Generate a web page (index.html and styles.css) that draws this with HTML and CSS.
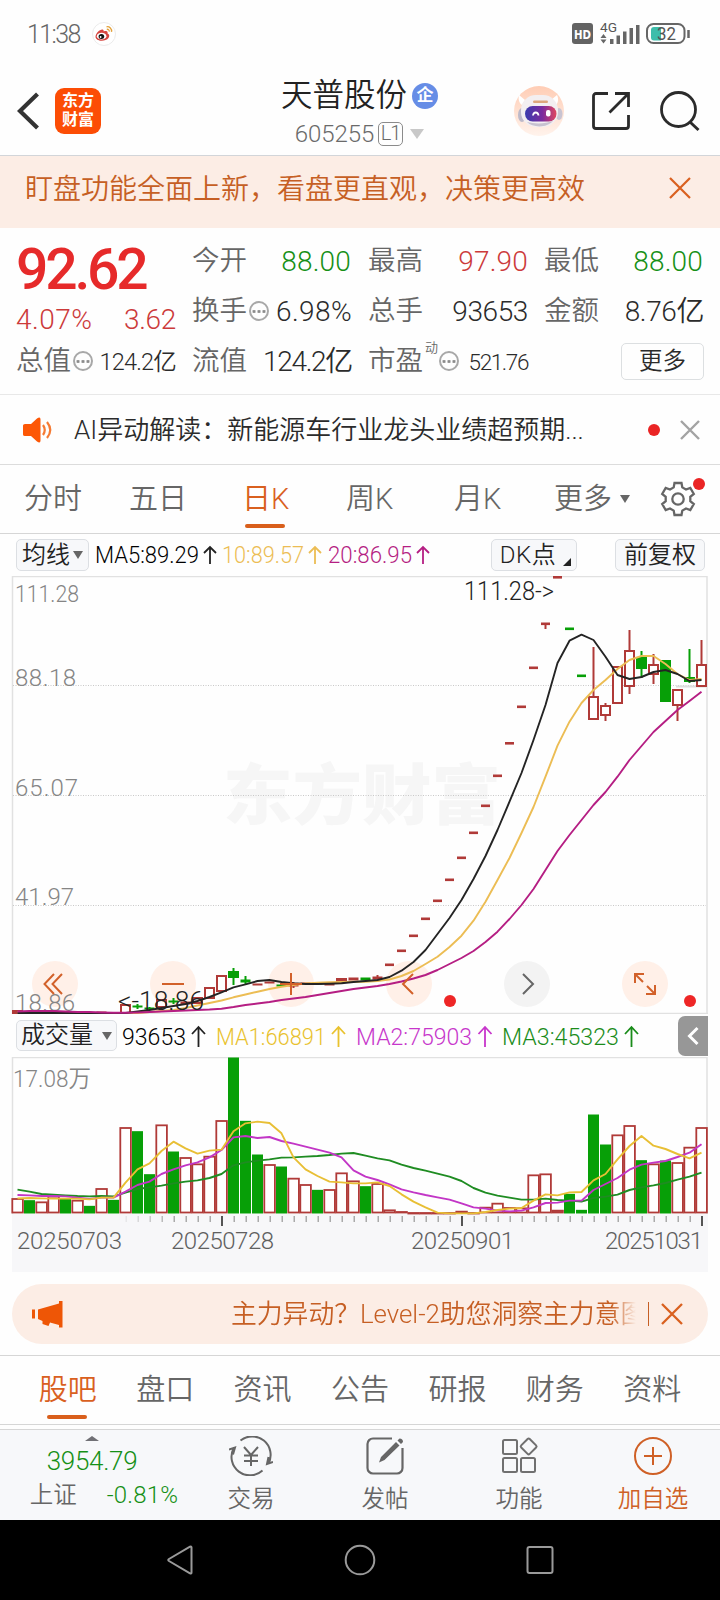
FILE: index.html
```html
<!DOCTYPE html>
<html lang="zh-CN">
<head>
<meta charset="utf-8">
<title>天普股份 605255</title>
<link rel="stylesheet" href="styles.css">
</head>
<body>
<div class="app">
  <div class="status">
    <span class="clock">11:38</span>
    <svg class="weibo" width="24" height="24" viewBox="0 0 24 24">
      <circle cx="12" cy="12" r="11.5" fill="#fff" stroke="#e6e6e6" stroke-width=".8"/>
      <path d="M3.5 14.5C4 11 8 7 10.600 7.500c1.600.3.9 1.900.9 1.900s3.500-1 4 .7c.3 1 0 1.500 0 1.500 2 .6 2.300 2.800 1 4.400-3 4-13.200 3.600-13-1.500z" fill="#d6453f"/>
      <ellipse cx="9.600" cy="14.200" rx="4.800" ry="3.400" fill="#fff"/>
      <ellipse cx="9.400" cy="14.400" rx="2.800" ry="2.500" fill="#111"/>
      <circle cx="8.600" cy="15" r=".9" fill="#fff"/>
      <path d="M14.500 4.800c3-.6 5.600 2 5 5M14.800 7.300c1.600-.2 2.700 1 2.400 2.400" fill="none" stroke="#e3a13a" stroke-width="1.300"/>
    </svg>
    <svg class="signals" width="118" height="28" viewBox="0 -2 118 28">
      <rect x="0" y="1" width="21" height="21" rx="3" fill="#636363"/>
      <text x="2" y="16.500" class="hd" textLength="17" lengthAdjust="spacingAndGlyphs">HD</text>
      <text x="28" y="10" class="g4" textLength="17" lengthAdjust="spacingAndGlyphs">4G</text>
      <path d="M28.500 16l3-4 3 4zM28.500 17.500l3 4 3-4z" fill="#666"/>
      <path d="M38 17h3.500v5H38zM44.500 13.500H48V22h-3.500zM51 9.500h3.500V22H51zM57.500 6H61v16h-3.500zM64 3h3.500v19H64z" fill="#666"/>
      <rect x="75" y="2" width="37.500" height="19" rx="6.500" fill="none" stroke="#666" stroke-width="2"/>
      <path d="M82 5h7v13.500h-7a3 3 0 0 1-3-3V8a3 3 0 0 1 3-3z" fill="#3dbdab"/>
      <path d="M116.500 8v8" stroke="#666" stroke-width="2.500"/>
      <text x="85" y="18" class="pct" textLength="19" lengthAdjust="spacingAndGlyphs">32</text>
    </svg>
  </div>

  <header class="top">
    <svg class="back" width="24" height="40" viewBox="0 0 24 40"><path d="M20.500 3L3 20l17.500 17" fill="none" stroke="#333" stroke-width="4.200"/></svg>
    <div class="logo"><span>东方</span><span>财富</span></div>
    <div class="name">
      <div class="title">天普股份<span class="badge">企</span></div>
      <div class="code">605255<span class="lv">L1</span><i class="tri"></i></div>
    </div>
    <svg class="robot" width="50" height="50" viewBox="0 0 50 50">
      <defs>
        <linearGradient id="rb" x1="0" y1="0" x2="0" y2="1"><stop offset="0" stop-color="#ffcdb5"/><stop offset="1" stop-color="#fff3ec"/></linearGradient>
        <linearGradient id="rv"><stop offset="0" stop-color="#3a3cae"/><stop offset=".55" stop-color="#7b2c9e"/><stop offset="1" stop-color="#e0455f"/></linearGradient>
      </defs>
      <circle cx="25" cy="25" r="25" fill="url(#rb)"/>
      <path d="M5 9l6 5-3 5c-3-2-4-6-3-10zM43 9l-6 5 5 5c2-2 3-6 1-10z" fill="#fff"/>
      <ellipse cx="8" cy="29" rx="4" ry="7" fill="#bdb9c9"/><ellipse cx="45" cy="28" rx="3.500" ry="6" fill="#c9c4d2"/>
      <rect x="7" y="9" width="37" height="32" rx="15" fill="#f3eff1"/>
      <path d="M13 36c6 6 20 6 26-1-8 3-18 3-26 1z" fill="#c7c2d0"/>
      <rect x="19" y="14.500" width="15" height="2.500" rx="1.200" fill="#dda77c"/>
      <rect x="11" y="20" width="31.500" height="15.500" rx="7.700" fill="url(#rv)"/>
      <path d="M19 29.500c.5-4 5-4 5.500 0" fill="none" stroke="#fff" stroke-width="1.800"/>
      <rect x="32" y="24" width="4.500" height="6.500" rx="2" fill="#fff"/>
    </svg>
    <svg class="share" width="40" height="40" viewBox="0 0 40 40"><path d="M17 2.500H5A2.500 2.500 0 0 0 2.500 5v30A2.500 2.500 0 0 0 5 37.500h30a2.500 2.500 0 0 0 2.500-2.500V24M24 2.500h13.500V16M37 3L18.500 21.500" fill="none" stroke="#2b2b2b" stroke-width="2.800"/></svg>
    <svg class="search" width="42" height="42" viewBox="0 0 42 42"><circle cx="19.500" cy="19.500" r="17" fill="none" stroke="#2b2b2b" stroke-width="2.800"/><path d="M31 32l8.500 8" stroke="#2b2b2b" stroke-width="3"/></svg>
  </header>

  <div class="banner">
    <span>盯盘功能全面上新，看盘更直观，决策更高效</span>
    <svg width="24" height="24" viewBox="0 0 24 24"><path d="M2 2l20 20M22 2L2 22" stroke="#d9601f" stroke-width="2.200"/></svg>
  </div>

  <section class="quote">
    <div class="col first">
      <div class="price">92.62</div>
      <div class="cell chg"><b class="red">4.07%</b><b class="red">3.62</b></div>
      <div class="cell"><label>总值</label><i class="dots"></i><b class="sm">124.2亿</b></div>
    </div>
    <div class="col">
      <div class="cell"><label>今开</label><b class="green">88.00</b></div>
      <div class="cell"><label>换手</label><i class="dots"></i><b class="wide">6.98%</b></div>
      <div class="cell"><label>流值</label><b class="tight">124.2亿</b></div>
    </div>
    <div class="col">
      <div class="cell"><label>最高</label><b class="red">97.90</b></div>
      <div class="cell"><label>总手</label><b class="num">93653</b></div>
      <div class="cell"><label>市盈</label><sup>动</sup><i class="dots"></i><b class="sm xs">521.76</b></div>
    </div>
    <div class="col">
      <div class="cell"><label>最低</label><b class="green">88.00</b></div>
      <div class="cell"><label>金额</label><b class="num">8.76亿</b></div>
      <div class="cell"><span class="more">更多</span></div>
    </div>
  </section>

  <div class="ai">
    <svg width="30" height="26" viewBox="0 0 30 26"><path d="M1 8.500Q1 7 3 7h6L15 1.500Q18.500 -1 18.500 2.500v21Q18.500 27 15 24.500L9 19H3q-2 0-2-1.500z" fill="#fd5705"/><path d="M21 8q3.500 5 0 10M25 5q6.500 8 0 16" fill="none" stroke="#f57a33" stroke-width="2.200"/></svg>
    <span class="aitext">AI异动解读：新能源车行业龙头业绩超预期...</span>
    <i class="dot"></i>
    <svg width="20" height="20" viewBox="0 0 20 20"><path d="M1 1l18 18M19 1L1 19" stroke="#a3a3a3" stroke-width="2.400"/></svg>
  </div>

  <nav class="periods">
    <span>分时</span><span>五日</span><span class="on">日K</span><span>周K</span><span>月K</span><span class="pm">更多<i></i></span>
    <div class="gear">
      <svg width="36" height="36" viewBox="0 0 36 36"><path d="M14.500 2h7l.8 4.400 3.700 2.200 4.300-1.600 3.500 6-3.500 2.900v4.200l3.500 2.900-3.500 6-4.300-1.600-3.700 2.200-.8 4.400h-7l-.8-4.400L10 27.400 5.700 29l-3.500-6 3.500-2.900v-4.200L2.200 13l3.500-6L10 8.600l3.700-2.200z" fill="none" stroke="#666" stroke-width="2.300"/><circle cx="18" cy="18" r="5.700" fill="none" stroke="#666" stroke-width="2.300"/></svg>
      <i class="dot"></i>
    </div>
  </nav>

  <div class="malegend">
    <span class="btn avg">均线<i></i></span>
    <svg class="matext" width="350" height="40" viewBox="90 535 350 40">
      <text x="95" y="563" textLength="104" lengthAdjust="spacingAndGlyphs">MA5:89.29</text>
      <text x="222" y="563" textLength="82" lengthAdjust="spacingAndGlyphs" fill="#ecbd54">10:89.57</text>
      <text x="328" y="563" textLength="84" lengthAdjust="spacingAndGlyphs" fill="#b51e83">20:86.95</text>
      <path d="M210 564V547M204 553l6-6 6 6" stroke="#222"/><path d="M315 564V547M309 553l6-6 6 6" stroke="#ecbd54"/><path d="M423 564V547M417 553l6-6 6 6" stroke="#b51e83"/>
    </svg>
    <span class="btn dk">DK点<i></i></span>
    <span class="btn fq">前复权</span>
  </div>

  <svg class="kline" width="720" height="438" viewBox="0 576 720 438">
    <text class="mark" x="223" y="819" textLength="278" lengthAdjust="spacingAndGlyphs">东方财富</text>
    <path d="M12.500 1014V576.500H707V1014" class="frame"/>
    <path d="M12 1013.500H708" class="frame"/>
    <path d="M13 685.500H706M13 795.500H706M13 905.500H706" class="gridline"/>
    <path d="M676 686.500H706" stroke="#ddd" stroke-width="2"/>
    <g class="pads">
      <circle cx="55" cy="984" r="23"/><circle cx="173" cy="984" r="23"/><circle cx="291" cy="984" r="23"/><circle cx="409" cy="984" r="23"/><circle cx="527" cy="984" r="23" class="gray"/><circle cx="645" cy="984" r="23"/>
    </g>
    <g class="axis">
      <text x="15" y="602" textLength="64" lengthAdjust="spacingAndGlyphs">111.28</text>
      <text x="15" y="686" textLength="61">88.18</text>
      <text x="15" y="796" textLength="63">65.07</text>
      <text x="15" y="905" textLength="59">41.97</text>
      <text x="15" y="1010.500" textLength="60">18.86</text>
    </g>
    <g id="candles"></g>
    <g class="note"><text x="464" y="600" textLength="90" lengthAdjust="spacingAndGlyphs">111.28-&gt;</text><text x="118" y="1010" textLength="86" lengthAdjust="spacingAndGlyphs">&lt;-18.86</text></g>
    <g class="ctrl">
      <path d="M54 974L44.500 984l9.500 10M62 974L52.500 984l9.500 10M162 984h22M280 984h22M291 973v22M413 974l-10 10 10 10"/>
      <path d="M523 974l10 10-10 10" stroke="#666"/>
      <path d="M635 983v-9h9M635 974l8 8M655 985v9h-9M655 994l-8-8"/>
    </g>
    <circle cx="450" cy="1001" r="6" class="hot"/><circle cx="690" cy="1001" r="6" class="hot"/>
  </svg>

  <div class="vlegend">
    <span class="btn vol">成交量<i></i></span>
    <svg class="matext" width="530" height="42" viewBox="120 1015 530 42">
      <text x="122" y="1045" textLength="64" lengthAdjust="spacingAndGlyphs">93653</text>
      <text x="216" y="1045" textLength="110" lengthAdjust="spacingAndGlyphs" fill="#e9c22e">MA1:66891</text>
      <text x="356" y="1045" textLength="116" lengthAdjust="spacingAndGlyphs" fill="#c736cb">MA2:75903</text>
      <text x="502" y="1045" textLength="117" lengthAdjust="spacingAndGlyphs" fill="#1a8c1a">MA3:45323</text>
      <path d="M198.500 1047v-20M192 1034l6.500-7 6.500 7" stroke="#222"/><path d="M338.500 1047v-20M332 1034l6.500-7 6.500 7" stroke="#e9c22e"/><path d="M485 1047v-20M478.500 1034l6.500-7 6.500 7" stroke="#c736cb"/><path d="M631.500 1047v-20M625 1034l6.500-7 6.500 7" stroke="#1a8c1a"/>
    </svg>
    <div class="fold"><svg width="12" height="20" viewBox="0 0 12 20"><path d="M10.500 2L2.500 10l8 8" fill="none" stroke="#fff" stroke-width="3"/></svg></div>
  </div>

  <svg class="volume" width="720" height="215" viewBox="0 1057 720 215">
    <rect x="12" y="1214" width="696" height="58" fill="#f7f7f9"/>
    <path d="M12.500 1214V1057.500H707V1214" class="frame"/>
    <text x="13" y="1086.500" class="axis" textLength="78" lengthAdjust="spacingAndGlyphs">17.08万</text>
    <g id="bars"></g>
    <g class="dates">
      <text x="17" y="1248.500" textLength="105">20250703</text><text x="171" y="1248.500" textLength="103">20250728</text>
      <text x="411" y="1248.500" textLength="103">20250901</text><text x="605" y="1248.500" textLength="98">20251031</text>
    </g>
  </svg>

  <div class="promo">
    <svg width="31" height="27" viewBox="0 0 31 27"><path d="M0 8.500h3v9H0zM6 8.500L27 2.500V0h3.500v26.500H27V24l-9-2.500-1.500 3.500-3-1-3-1V20L6 18z" fill="#ee5606"/></svg>
    <div class="ptext">主力异动？Level-2助您洞察主力意图</div>
    <i class="sep"></i>
    <svg width="22" height="22" viewBox="0 0 22 22"><path d="M1 1l20 20M21 1L1 21" stroke="#d9601f" stroke-width="2.300"/></svg>
  </div>

  <nav class="tabs"><span class="on">股吧</span><span>盘口</span><span>资讯</span><span>公告</span><span>研报</span><span>财务</span><span>资料</span></nav>

  <footer class="bar">
    <div class="index"><i></i><div class="val">3954.79</div><div class="sub"><span>上证</span><em>-0.81%</em></div></div>
    <div class="act"><svg width="44" height="40" viewBox="0 0 44 40"><g fill="none" stroke="#666" stroke-width="2"><path d="M11.500 4.500A18.500 18.500 0 0 1 39.500 27.500M33.500 34.500A18.500 18.500 0 0 1 4.500 12.500M0 13.500l6-2-2 7M44 26l-6 2 1.500-7"/><path d="M15 11l7 8 7-8M22 19v11M15 19.500h14M15 25h14"/></g></svg><span>交易</span></div>
    <div class="act"><svg width="40" height="40" viewBox="0 0 40 40"><path d="M27 2.500H8A5.500 5.500 0 0 0 2.500 8v24A5.500 5.500 0 0 0 8 37.500h24a5.500 5.500 0 0 0 5.500-5.500V12" fill="none" stroke="#666" stroke-width="2.200"/><path d="M14 26.500l2-5.500L31 6l3.500 3.500L19.500 24zM32.500 4.500l2-2q3.500 0 3.500 3.500l-2 2z" fill="#666"/></svg><span>发帖</span></div>
    <div class="act"><svg width="40" height="40" viewBox="0 0 40 40"><g fill="none" stroke="#707070" stroke-width="2"><rect x="4" y="4" width="14" height="14" rx="1.500"/><rect x="4" y="22" width="14" height="14" rx="1.500"/><rect x="22" y="22" width="14" height="14" rx="1.500"/><rect x="23.300" y="4.300" width="12" height="12" rx="1.500" transform="rotate(45 29.300 10.800)"/></g></svg><span>功能</span></div>
    <div class="act on"><svg width="40" height="40" viewBox="0 0 40 40"><circle cx="20" cy="20" r="18" fill="none" stroke="#cf6026" stroke-width="2"/><path d="M11 20h18M20 11v18" stroke="#cf6026" stroke-width="2"/></svg><span>加自选</span></div>
  </footer>

  <div class="sysnav">
    <svg width="28" height="32" viewBox="0 0 28 32"><path d="M25.500 3.500v25q0 1.500-1.500.8L3 17q-1.500-1 0-2L24 2.700q1.500-.7 1.500.8z"/></svg>
    <svg width="32" height="32" viewBox="0 0 32 32"><circle cx="16" cy="16" r="14.300"/></svg>
    <svg width="28" height="32" viewBox="0 0 28 32"><rect x="1.500" y="3" width="25" height="26" rx="2"/></svg>
  </div>
</div>
<script src="script.js"></script>
</body>
</html>
```

FILE: styles.css
```css
* { box-sizing: border-box; }
body { margin: 0; background: #fff; color: #2b2b2b; font-family: Roboto, "Noto Sans CJK SC", sans-serif; font-weight: 350; }
.app { width: 720px; height: 1600px; display: flex; flex-direction: column; overflow: hidden; background: #fefefe; }
.app > * { flex: none; }
svg { display: block; flex: none; }
i, em { font-style: normal; }
b { font-weight: inherit; }

.status { height: 66px; display: flex; align-items: center; padding: 2px 30px 0 27px; }
.clock { font-size: 25px; line-height: 30px; letter-spacing: -1.6px; width: 65px; color: #666; padding-top: 1px; }
.signals { margin-left: auto; }
.hd { font: 700 13px "DejaVu Sans", sans-serif; fill: #fff; }
.g4 { font: 13px Roboto, sans-serif; fill: #555; }
.pct { font: 18px Roboto, sans-serif; fill: #555; }

.top { height: 90px; display: flex; align-items: center; border-bottom: 1px solid #d2d5d9; padding: 0 19px 0 17px; }
.logo { width: 46px; height: 46px; margin-left: 14px; border-radius: 9px; background: #fc4d05; color: #fff; font-weight: 700; font-size: 16px; line-height: 18px; display: flex; flex-direction: column; align-items: center; justify-content: center; gap: 1px; }
.name { flex: 1; padding: 4px 0 0 130px; display: flex; flex-direction: column; align-items: center; margin-right: 26px; }
.title { display: flex; align-items: center; gap: 5px; font-size: 31.500px; line-height: 42px; white-space: nowrap; color: #222; }
.badge { width: 26px; height: 26px; border-radius: 50%; background: #668de6; color: #fff; font-size: 17px; font-weight: 700; line-height: 25px; text-align: center; }
.code { display: flex; align-items: center; font-size: 24px; line-height: 34px; color: #6a6a6a; letter-spacing: -.1px; }
.lv { border: 1.500px solid #8b8b8b; border-radius: 5px; height: 24px; width: 25px; line-height: 21px; font-size: 20px; text-align: center; margin-left: 4px; letter-spacing: -1px; }
.tri { border: 7px solid transparent; border-top: 10px solid #c8c8c8; border-bottom: 0; margin-left: 7px; }
.robot { margin-right: 27px; }
.share { margin-right: 28px; }

.banner { height: 72px; background: #fcede5; color: #c65f24; font-size: 28px; display: flex; align-items: center; justify-content: space-between; padding: 0 28px 8px 25px; white-space: nowrap; }
.banner span { padding-bottom: 3px; }

.quote { height: 167px; display: grid; grid-template-columns: repeat(4, 160px); column-gap: 16px; padding: 8px 16px 0; border-bottom: 1px solid #e8e8e8; }
.cell { height: 50px; display: flex; align-items: center; font-size: 28px; line-height: 50px; white-space: nowrap; }
.cell label { color: #666; width: 57px; font-size: 27.500px; }
.cell b { margin: 2px 0 0 auto; font-size: 28px; letter-spacing: .2px; }
.cell b.wide { letter-spacing: .4px; }
.cell b.num { letter-spacing: -.4px; }
.cell b.tight { letter-spacing: -1.300px; }
.cell b.sm { font-size: 23.500px; letter-spacing: -.8px; }
.cell b.xs { margin-right: 0; font-size: 22.500px; letter-spacing: -1.400px; }
.price { height: 66px; color: #e62a2a; font-size: 57px; font-weight: 500; line-height: 67px; letter-spacing: -3.200px; }
.chg { height: 34px; line-height: 34px; }
.chg b.red:first-child { margin-left: 0; letter-spacing: .5px; }
.chg b { letter-spacing: -.3px; font-size: 28px; }
.cell b.red { color: #cc3a3a; }
.cell b.green { color: #169016; margin-right: 1px; }
.dots { width: 20px; height: 20px; border: 2px solid #a8a8a8; border-radius: 50%; background: radial-gradient(circle, #8c8c8c 1.300px, transparent 1.800px) center / 5px 5px repeat-x; background-clip: content-box; padding: 0 1px; }
sup { font-size: 13px; line-height: 14px; align-self: flex-start; margin: 5px 1px 0 0; color: #666; }
.more { margin-left: auto; width: 83px; height: 37px; border: 1px solid #dcdfe1; border-radius: 5px; text-align: center; line-height: 34px; font-size: 23.500px; }

.ai { height: 70px; display: flex; align-items: center; border-bottom: 1px solid #dcdcdc; padding: 0 20px 0 22px; }
.aitext { margin-left: 22px; font-size: 26px; line-height: 40px; white-space: nowrap; flex: 1; }
.dot { width: 12px; height: 12px; border-radius: 50%; background: #ea2424; }
.ai .dot { margin-right: 20px; }

.periods { height: 69px; display: flex; align-items: center; border-bottom: 1px solid #d6d6d6; font-size: 29px; line-height: 40px; color: #666; padding: 0 20px 0 24px; }
.periods span { position: relative; margin-right: 47px; width: 58px; white-space: nowrap; }
.periods span.on { width: 47px; margin-left: 8px; margin-right: 57px; }
.periods span.on + span { margin-right: 60px; width: 48px; }
.periods span.on + span + span { margin-right: 52px; width: 48px; }
.periods span.pm { width: 76px; margin-right: 30px; display: flex; align-items: center; gap: 8px; }
.on { color: #d9601f; }
.periods .on::after, .tabs .on::after { content: ""; position: absolute; left: 50%; margin-left: -21px; bottom: -9px; width: 40px; height: 4px; border-radius: 2px; background: #d95f1c; }
.pm i, .avg i, .vol i { border: 5px solid transparent; border-top: 8px solid #666; border-bottom: 0; }
.gear { position: relative; }
.gear .dot { position: absolute; right: -9px; top: -3px; }

.malegend { height: 42px; display: flex; align-items: center; padding: 0 15px 0 16px; }
.btn { height: 32px; border: 1px solid #dcdfe3; border-radius: 5px; background: #f7f8fa; color: #222; font-size: 24px; line-height: 29px; text-align: center; display: flex; align-items: center; justify-content: center; gap: 3px; white-space: nowrap; flex: none; }
.avg { width: 73px; }
.dk { width: 86px; margin-left: auto; margin-right: 38px; position: relative; padding-right: 12px; letter-spacing: .5px; }
.dk i { position: absolute; right: 5px; bottom: 4px; border-left: 8px solid transparent; border-bottom: 8px solid #222; }
.fq { width: 90px; }
.matext { overflow: visible; }
.matext text { font: 350 23.500px Roboto, sans-serif; }
.matext path { fill: none; stroke-width: 1.800; }
.avg + .matext { margin-left: 1px; }

.frame { fill: none; stroke: #e1e1e1; stroke-width: 1.500; }
.gridline { stroke: #c9c9c9; stroke-width: 1; stroke-dasharray: 1 1.500; }
.mark { font: 900 66px "Noto Sans CJK SC", sans-serif; fill: #f6f6f6; }
.axis { font: 350 24px Roboto, "Noto Sans CJK SC", sans-serif; fill: #858585; }
.note { font: 350 25px Roboto, sans-serif; fill: #222; }
.pads circle { fill: #fff0e8; }
.pads .gray { fill: #f3f3f3; }
.ctrl path { fill: none; stroke: #d2612a; stroke-width: 2; }
.ctrl path:nth-child(2) { stroke: #666; }
.hot { fill: #ee2626; }
.dates { font: 350 24px Roboto, sans-serif; fill: #606060; }

.vlegend { height: 43px; display: flex; align-items: center; padding: 0 12px 0 16px; }
.vol { width: 101px; height: 31px; gap: 9px; }
.vol + .matext { margin-left: 3px; }
.fold { width: 30px; height: 40px; margin-left: auto; border-radius: 7px 0 0 7px; background: #979797; display: flex; align-items: center; justify-content: center; }

.promo { margin: 12px 12px 0; height: 60px; border-radius: 30px; background: #fcede5; display: flex; align-items: center; padding: 0 25px 0 20px; }
.ptext { margin-left: 168px; width: 410px; overflow: hidden; white-space: nowrap; font-size: 25.800px; line-height: 40px; color: #c65f24; -webkit-mask-image: linear-gradient(90deg, #000 93%, transparent 99%); mask-image: linear-gradient(90deg, #000 93%, transparent 99%); }
.sep { width: 1px; height: 24px; background: #c65f24; margin: 0 12px 0 8px; }

.tabs { margin-top: 11px; height: 70px; border-top: 1px solid #d6d6d6; border-bottom: 1px solid #d6d6d6; display: flex; align-items: center; padding: 0 19px; font-size: 29px; line-height: 40px; color: #666; }
.tabs span { position: relative; width: 97.500px; text-align: center; }
.tabs .on { color: #d9601f; }
.tabs .on::after { bottom: -9px; }

.bar { margin-top: 4px; height: 91px; border-top: 1px solid #d6d6d6; background: #f7f8fa; display: flex; }
.index { width: 184px; display: flex; flex-direction: column; align-items: center; padding-top: 6px; color: #169016; }
.index i { border: 7px solid transparent; border-bottom: 5px solid #707075; border-top: 0; }
.val { font-size: 26px; line-height: 30px; margin-top: 5px; letter-spacing: -.3px; }
.sub { display: flex; font-size: 24px; line-height: 30px; gap: 30px; margin: 2px 0 0 24px; white-space: nowrap; }
.sub span { color: #666; font-size: 23.500px; line-height: 34px; }
.sub em { line-height: 34px; letter-spacing: .2px; }
.act { width: 134px; padding-top: 6px; display: flex; flex-direction: column; align-items: center; font-size: 23.500px; line-height: 34px; color: #666; gap: 6px; }
.act.on { color: #cf6026; }

.sysnav { height: 80px; background: #000; display: flex; align-items: center; justify-content: center; gap: 150px; }
.sysnav svg { fill: none; stroke: #9a9a9a; stroke-width: 2; }
```

FILE: script.js
```js
const RED = "#b03a38", GREEN = "#079f07";
const cx = i => 17.5 + 12 * i;

function add(parent, tag, attrs) {
  const el = document.createElementNS("http://www.w3.org/2000/svg", tag);
  for (const k in attrs) el.setAttribute(k, attrs[k]);
  parent.appendChild(el);
}
function line(parent, pts, color) {
  add(parent, "polyline", {
    points: pts.map(p => p.join(",")).join(" "),
    fill: "none", stroke: color, "stroke-width": 1.9, "stroke-linejoin": "round"
  });
}

// [index, up, high, top, bottom, low] in chart pixels
const candles = [
  [0,1,1011,1011,1014,1014],[1,1,1013,1013,1014,1014],[2,0,1013,1013,1014,1014],[3,1,1013,1013,1014,1014],[4,0,1013,1013,1014,1014],
  [7,1,1012,1012,1013,1013],[9,1,1005,1005,1013,1013],[10,0,1004,1006,1007,1009],[11,0,1007,1008,1009,1010],
  [12,1,999,1000,1007,1007],[13,0,998,1001,1002,1004],[14,1,1001,1002,1004,1004],[15,1,997,998,1003,1003],
  [16,1,987,988,998,998],[17,1,975,976,991,991],[18,0,968,972,977,985],[19,0,976,980,982,984],
  [20,1,984,984,985,985],[21,1,982,982,983,983],[22,0,985,985,986,986],[23,1,982,984,986,988],[24,1,983,983,984,984],
  [25,0,983,983,984,984],[26,1,984,984,985,985],[27,1,979,979,982,982],[28,1,978,978,980,980],[29,0,978,978,980,980],[30,1,975,977,979,979],
  [48,1,647,697,719,720],[49,1,703,706,715,721],[50,1,666,667,703,703],[51,1,630,651,686,694],[52,0,651,658,668,678],
  [53,1,654,665,674,684],[54,0,660,661,701,702],[55,1,689,690,705,721],[56,0,649,678,681,683],[57,1,640,665,686,686]
];
const dashes = [965,951,936,919,901,880,858,833,806,776,743.5,707,668,624,577.5,629,676];

const k = document.getElementById("candles");
for (const [i, up, hi, top, bot, lo] of candles) {
  const x = cx(i), c = up ? RED : GREEN;
  add(k, "path", { d: `M${x} ${hi}V${top}M${x} ${bot}V${lo}`, stroke: c, "stroke-width": 2 });
  const h = bot - top;
  add(k, "rect", { x: x - 4.5, y: top, width: 9, height: Math.max(h, 1), fill: up && h > 4 ? "#fff" : c, stroke: c, "stroke-width": h < 3 ? 1 : 2 });
}
dashes.forEach((y, n) => {
  add(k, "rect", { x: cx(31 + n) - 4.5, y: y - 1.5, width: 9, height: 2.6, fill: n > 14 ? GREEN : RED });
});
add(k, "rect", { x: cx(44) - 1, y: 624, width: 2, height: 5, fill: RED });

line(k, [1012.5,1013,1013,1013,1013,1013,1013,1013,1013.5,1013.5,1013,1012,1011,1010,1008,1005.5,1003,1000.5,997.3,994.5,991.7,989,986.7,985,983.5,982.7,982.3,982,981.7,981.7,981,979.5,976,971,964,956.7,947,935.7,920.7,901.7,880,858,833,807,776.7,745.7,721.7,703,690,680,669,660,656,656,664,674,680,679].map((y, i) => [cx(i), y]), "#ecbd54");
line(k, [1013,1013,1013,1013,1013,1013,1013,1013.5,1013.5,1013,1011.5,1010,1008,1006,1004,1001,997,992.3,987.3,984.3,981,980,982,983.3,984,984,983.7,983.3,982,981,980,977,970.7,962,950,934,918,900,879,856,830,801.7,773,740,705,663,640.7,634.7,640,656.7,675,679,677,672,670,674,681,680].map((y, i) => [cx(i), y]), "#242424");
line(k, [1011.5,1011,1011,1011,1011.5,1012,1012,1012.5,1012.8,1012.8,1012.5,1012,1011.5,1011,1010.5,1010,1009.5,1008.7,1007,1005,1003.5,1002,1000,998.5,997,995,993,991,989,987.5,986,984,981.5,978.5,975,970,964,958,951,942,931.7,919,905,889,870,851,835,820,805,792,776.7,760,746,732,721,710,701,691.7].map((y, i) => [cx(i), y]), "#b51e83");

// Volume bars: negative entries are falling days; values are heights in thirds of a pixel
const vols = [42,-40,32,49,-46,37,-23,72,-41,255,-247,-118,263,-186,165,146,169,276,-468,-278,-177,144,-141,103,84,-71,69,119,95,-82,87,8,3,0,0,0,0,4,0,16,28,15,14,113,116,7,-59,-11,-297,-207,233,261,-160,146,-159,150,196,255];
const v = document.getElementById("bars");
vols.forEach((n, i) => {
  const h = Math.abs(n) / 3, x = cx(i) - 5.5;
  if (n < 0) add(v, "rect", { x, y: 1213.5 - h, width: 11, height: h, fill: GREEN });
  else add(v, "rect", { x: x + .3, y: 1213 - h, width: 10.6, height: Math.max(h - .5, .5), fill: "#fff", stroke: RED, "stroke-width": 1.8 });
});
const vline = (a, c) => line(v, a.map((y, i) => [cx(i), 930 + y / 3]), c);
vline([779,785,792,794,796,798,799,798,799,788,777,772,767,760,755,751,744,732,706,697,692,688,683,682,680,678,675,671,669,677,685,691,704,714,722,731,740,753,774,788,797,803,809,809,806,810,812,815,804,800,794,780,772,766,759,749,740,728], "#1f8c22");
vline([795,796,798,798,799,803,807,803,803,785,765,755,732,718,706,697,682,660,622,618,624,621,633,641,650,659,668,682,721,740,750,763,778,787,795,802,809,820,832,836,842,844,842,832,819,818,812,812,780,762,744,719,704,698,693,681,668,643], "#c236c6");
vline([805,804,805,806,806,806,808,803,803,758,718,700,663,635,655,671,662,659,604,580,575,579,610,682,718,738,755,757,760,760,757,768,793,815,832,848,850,850,850,846,840,836,834,812,793,796,787,786,751,732,688,648,618,647,657,672,685,668], "#e8bf35");

// Day ticks under the volume chart, taller on labelled dates
for (let i = 9; i < 58; i++) {
  const major = i === 17 || i === 37 || i === 57;
  add(v, "rect", {
    x: cx(i) - (major ? .5 : 0), y: 1216, width: major ? 2 : 1.5, height: major ? 10 : 6,
    fill: major ? "#555" : "#aaa", opacity: i < 13 ? (i - 8) / 5 : 1
  });
}
```
